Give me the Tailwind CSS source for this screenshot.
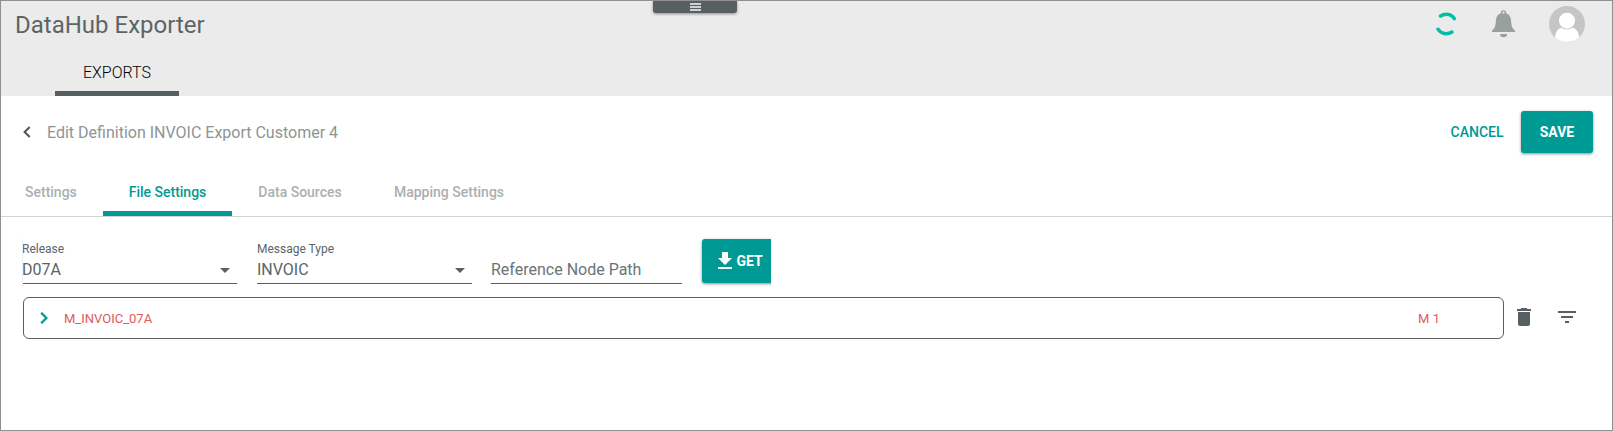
<!DOCTYPE html>
<html lang="en">
<head>
<meta charset="utf-8">
<title>DataHub Exporter</title>
<script src="https://cdn.jsdelivr.net/npm/@tailwindcss/browser@4"></script>
</head>
<body class="bg-white">
<div class="relative flex h-[431px] w-[1613px] flex-col overflow-hidden border border-[#8f8f8f] bg-white font-['Roboto',sans-serif] text-[#5b6567]">
  <header class="flex h-[95px] shrink-0 flex-col bg-[#ebebeb]">
    <div class="flex h-[46px] items-center justify-between pr-[27px] pl-[14px]">
      <h1 class="pt-0.5 text-2xl leading-[46px]">DataHub Exporter</h1>
      <div class="flex items-center">
        <svg class="mr-[33px] h-6 w-6" viewBox="0 0 24 24" fill="none" stroke="#00bfa5" stroke-width="3.400" stroke-linecap="round"><path d="M5.500 4C10 1 16.500 1.700 19.400 6.600"/><path d="M3 17.200C6 22 12 23 17 20"/></svg>
        <svg class="mr-[34px] h-7 w-[23px]" viewBox="0 0 23 28" fill="#9a9f9f"><path fill-rule="evenodd" d="M11.500 0.300a2.600 2.600 0 0 1 2.600 2.900C17.700 4.300 19 7.500 19.200 12c.2 4 1 6.500 3.800 8.500V22H0v-1.500C2.800 18.500 3.600 16 3.800 12 4 7.500 5.300 4.300 8.900 3.200A2.600 2.600 0 0 1 11.500.3zm0 1.300a1.100 1.100 0 1 0 0 2.200 1.100 1.100 0 0 0 0-2.200z"/><path d="M8 24h7a3.500 3.200 0 0 1-7 0z"/></svg>
        <svg class="h-9 w-9" viewBox="0 0 36 36"><defs><clipPath id="avatar"><circle cx="18" cy="18" r="18"/></clipPath></defs><g clip-path="url(#avatar)"><rect width="36" height="36" fill="#c5c5c5"/><path fill="#fff" d="M6 32c0-4.500 2-9.300 6.500-10.300 3 2.300 8 2.300 11 0C28 22.700 30.200 27.500 30.200 32c-3 3-7 4-12.200 4S9 35 6 32z"/><circle cx="18" cy="14.700" r="8" fill="#fff"/></g></svg>
      </div>
    </div>
    <nav class="flex h-[49px] pl-[54px]">
      <a class="flex w-[124px] items-center justify-center border-b-[5px] border-[#565f61] pt-[7px] text-base font-light text-black">EXPORTS</a>
    </nav>
  </header>
  <button class="absolute top-0 left-[652px] flex h-3 w-[84px] items-center justify-center rounded-b-[3px] bg-[#565f61] shadow-[0_1px_3px_rgba(0,0,0,.4)]">
    <svg class="h-2 w-[11px]" viewBox="0 0 11 8" fill="#cdd1d2"><path d="M0 0h11v2H0zM0 3h11v2H0zM0 6h11v2H0z"/></svg>
  </button>

  <section class="flex h-[71px] shrink-0 items-center justify-between pr-[19px] pl-[22px]">
    <div class="flex items-center">
      <svg class="h-3 w-2" viewBox="0 0 8 12" fill="none" stroke="#4b5558" stroke-width="2"><path d="M6.700 1 1.600 6l5.100 5"/></svg>
      <h2 class="pt-0.5 pl-4 text-base text-[#8e9495]">Edit Definition INVOIC Export Customer 4</h2>
    </div>
    <div class="flex items-center">
      <button class="mr-[17.500px] text-sm font-medium text-[#009a94]">CANCEL</button>
      <button class="h-[42px] w-[72px] rounded-[3px] bg-[#009a94] text-sm font-bold text-white shadow-[0_1px_3px_rgba(0,0,0,.45)]">SAVE</button>
    </div>
  </section>

  <nav class="flex h-[50px] shrink-0 border-b border-[#d4d4d4] text-sm font-medium text-[#abafb0]">
    <a class="flex w-[102px] items-center pt-px pl-6">Settings</a>
    <a class="flex w-[129px] items-center justify-center border-b-[5px] border-[#009a94] pt-1.5 text-[#009a94]">File Settings</a>
    <a class="flex w-[136px] items-center justify-center pt-px">Data Sources</a>
    <a class="flex w-[162px] items-center justify-center pt-px">Mapping Settings</a>
  </nav>

  <form class="flex h-[80px] shrink-0 pt-[22px] pl-[22px]">
    <div class="relative mr-5 flex h-[45px] w-[214px] flex-col border-b border-[#565f61]">
      <span class="-ml-px pt-[3px] text-xs leading-[14px]">Release</span>
      <div class="flex h-7 items-center justify-between pr-[7px]">
        <span class="-ml-px text-base">D07A</span>
        <svg class="mt-px h-[5px] w-[10px]" viewBox="0 0 10 5" fill="#565f61"><path d="M0 0h10L5 5z"/></svg>
      </div>
      <span class="absolute top-0 -left-px h-[48px] w-px bg-[#ececec]"></span>
    </div>
    <div class="mr-[19px] flex h-[45px] w-[215px] flex-col border-b border-[#565f61]">
      <span class="pt-[3px] text-xs leading-[14px]">Message Type</span>
      <div class="flex h-7 items-center justify-between pr-[7px]">
        <span class="text-base">INVOIC</span>
        <svg class="mt-px h-[5px] w-[10px]" viewBox="0 0 10 5" fill="#565f61"><path d="M0 0h10L5 5z"/></svg>
      </div>
    </div>
    <div class="mr-5 flex h-[45px] w-[191px] flex-col border-b border-[#565f61] pt-[17px]">
      <span class="text-base leading-[28px] text-[#6b7476]">Reference Node Path</span>
    </div>
    <div class="-mt-2 -ml-2 h-[62px] w-[77px] overflow-hidden pt-2 pl-2">
      <button class="flex h-11 w-[76px] items-center rounded-[3px] bg-[#009a94] pl-4 text-sm font-bold text-white shadow-[0_1px_3px_rgba(0,0,0,.45)]">
        <svg class="mr-[4.500px] mb-px h-[17px] w-[14px]" viewBox="5 3 14 17" fill="#fff"><path d="M19 9h-4V3H9v6H5l7 7 7-7zM5 18v2h14v-2H5z"/></svg>GET
      </button>
    </div>
  </form>

  <div class="flex h-[42px] shrink-0 items-center pl-[22px]">
    <div class="flex h-[42px] w-[1481px] items-center justify-between rounded-[6px] border border-[#565f61] pr-[63px] pl-4 text-[13px] text-[#db5c5c]">
      <div class="flex items-center">
        <svg class="mr-4 h-3 w-2" viewBox="0 0 8 12" fill="none" stroke="#009a94" stroke-width="2.300"><path d="M1.200.8 6.400 6l-5.200 5.200"/></svg>
        <span class="pt-0.5">M_INVOIC_07A</span>
      </div>
      <span class="pt-0.5">M 1</span>
    </div>
    <svg class="mb-[2px] ml-[13px] h-[18px] w-[14px]" viewBox="5 3 14 18" fill="#565f61"><path d="M6 19c0 1.100.9 2 2 2h8c1.100 0 2-.9 2-2V7H6v12zM19 4h-3.500l-1-1h-5l-1 1H5v2h14V4z"/></svg>
    <svg class="mb-[2px] ml-[27px] h-3 w-[18px]" viewBox="3 6 18 12" fill="#565f61"><path d="M10 18h4v-2h-4v2zM3 6v2h18V6H3zm3 7h12v-2H6v2z"/></svg>
  </div>
</div>
</body>
</html>
